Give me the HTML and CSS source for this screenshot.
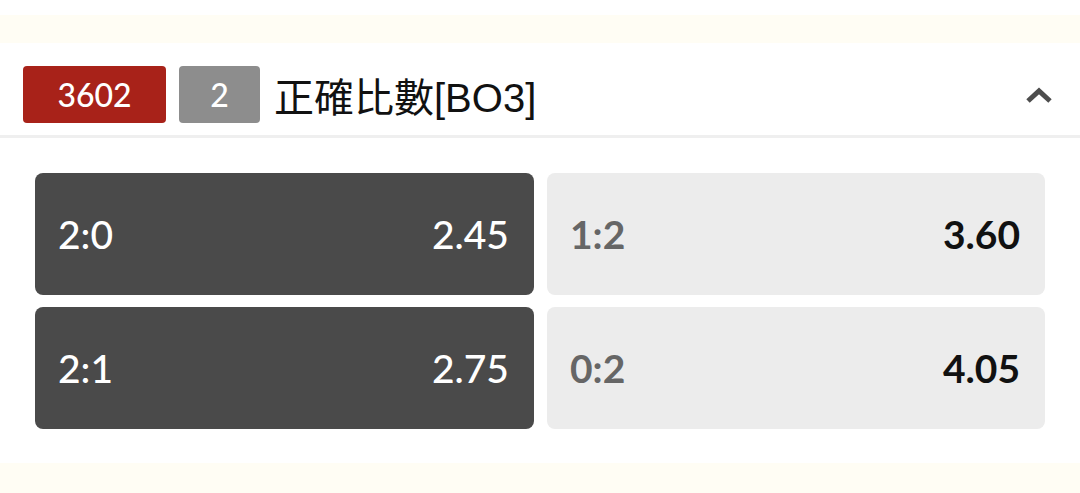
FILE: index.html
```html
<!DOCTYPE html>
<html lang="zh-Hant">
<head>
    <meta charset="UTF-8">
    <meta name="viewport" content="width=device-width, initial-scale=1.0">
    <title>正確比數</title>
    <link rel="stylesheet" href="styles.css">
</head>
<body>
    <div class="strip top"></div>

    <div class="market">
        <div class="market-head">
            <span class="badge code">3602</span>
            <span class="badge num">2</span>
            <span class="market-title">正確比數[BO3]</span>
            <svg class="chevron" width="28" height="18" viewBox="0 0 28 18">
                <path d="M3 15 L14 5 L25 15" fill="none" stroke="#4d4d4d" stroke-width="5" stroke-linejoin="miter"/>
            </svg>
        </div>

        <div class="odds-grid">
            <div class="odd selected">
                <span class="score">2:0</span>
                <span class="price">2.45</span>
            </div>
            <div class="odd">
                <span class="score">1:2</span>
                <span class="price">3.60</span>
            </div>
            <div class="odd selected">
                <span class="score">2:1</span>
                <span class="price">2.75</span>
            </div>
            <div class="odd">
                <span class="score">0:2</span>
                <span class="price">4.05</span>
            </div>
        </div>
    </div>

    <div class="strip bottom"></div>
</body>
</html>
```

FILE: styles.css
```css
body {
    margin: 0;
    background: #ffffff;
    font-family: Lato, "Noto Sans CJK TC", sans-serif;
}

.strip {
    background: #fffdf4;
}

.strip.top {
    margin-top: 15px;
    height: 28px;
}

.strip.bottom {
    height: 30px;
}

.market {
    background: #ffffff;
}

.market-head {
    display: flex;
    align-items: center;
    height: 81px;
    padding: 11px 23px 0;
    border-bottom: 3px solid #efefef;
}

.badge {
    display: flex;
    align-items: center;
    justify-content: center;
    height: 57px;
    border-radius: 4px;
    color: #ffffff;
    font-size: 32px;
    font-weight: 500;
}

.badge.code {
    width: 143px;
    background: #a82219;
}

.badge.num {
    width: 81px;
    margin-left: 13px;
    background: #8d8d8d;
}

.market-title {
    margin-left: 14px;
    font-family: "Liberation Sans", "Noto Sans CJK TC", sans-serif;
    font-size: 40px;
    color: #111111;
}

.chevron {
    margin-left: auto;
    margin-right: 4px;
}

.odds-grid {
    display: grid;
    grid-template-columns: 499px 498px;
    gap: 12px 13px;
    padding: 35px 35px 34px;
}

.odd {
    display: flex;
    align-items: center;
    justify-content: space-between;
    height: 122px;
    padding: 0 25px 0 23px;
    border-radius: 8px;
    background: #ececec;
    font-size: 39px;
}

.odd .score {
    color: #666666;
    font-weight: 700;
}

.odd .price {
    color: #111111;
    font-weight: 700;
}

.odd.selected {
    background: #4a4a4a;
}

.odd.selected .score,
.odd.selected .price {
    color: #ffffff;
    font-weight: 500;
}
```
